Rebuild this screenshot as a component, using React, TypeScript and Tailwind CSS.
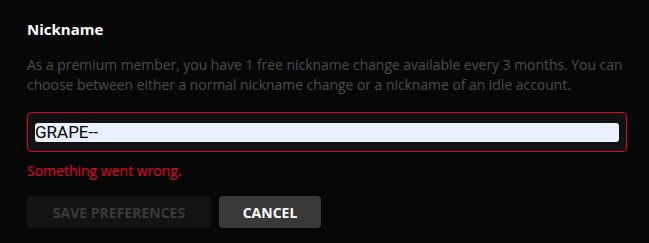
import React from "react";

export default function App() {
  return (
    <div
      className="w-[649px] h-[243px] bg-[#070707] pl-[27px] pr-[22px] pt-[19px]"
      style={{ fontFamily: "'Open Sans', Lato, sans-serif" }}
    >
      <h2 className="text-[15px] font-bold text-white leading-[20px]">Nickname</h2>
      <p className="mt-[16px] text-[13.9px] leading-[20px] text-[#4c4c4c]">
        As a premium member, you have 1 free nickname change available every 3 months. You can
        choose between either a normal nickname change or a nickname of an idle account.
      </p>
      <div className="mt-[17px] w-[600px] h-[40px] rounded-[4px] border border-[#e0002b] bg-[#121212] px-[7px] pt-[10px]">
        <input
          defaultValue="GRAPE--"
          className="block w-full h-[19px] rounded-[3px] bg-[#e8f0fe] text-black text-[17px] leading-[19px] outline-none"
          style={{ fontFamily: "Roboto, sans-serif" }}
        />
      </div>
      <div className="mt-[9px] text-[14px] leading-[20px] text-[#e8002a]">Something went wrong.</div>
      <div className="mt-[15px] flex gap-[8px]">
        <button className="w-[184px] h-[32px] rounded-[4px] bg-[#131313] text-[#3a3a3a] text-[14px] font-bold uppercase">
          Save Preferences
        </button>
        <button className="w-[102px] h-[32px] rounded-[4px] bg-[#393939] text-white text-[14px] font-bold uppercase">
          Cancel
        </button>
      </div>
    </div>
  );
}
